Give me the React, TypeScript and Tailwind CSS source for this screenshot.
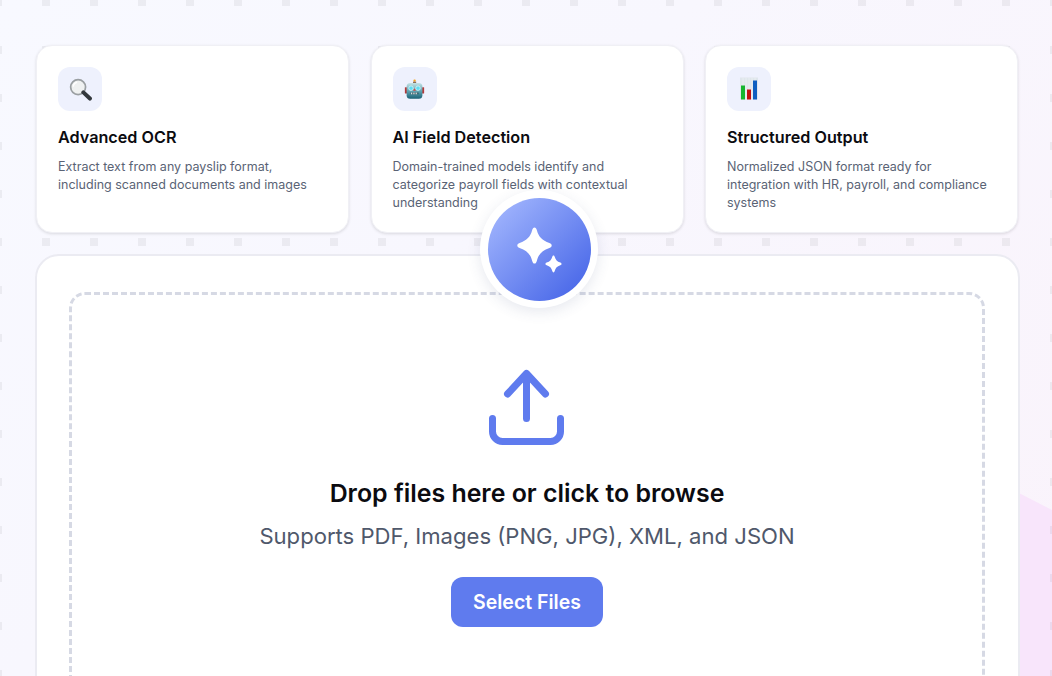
import { ReactNode } from "react";

const inter = "font-['Inter',sans-serif]";

function SearchIcon() {
  return (
    <svg width="23" height="23" viewBox="0 0 24 24">
      <circle cx="9.5" cy="9.5" r="7.8" fill="#eff1f1" stroke="#9a9fa2" strokeWidth="1.8" />
      <path d="M4.500 9a5 5 0 0 1 4-4.600" fill="none" stroke="#fff" strokeWidth="1.500" />
      <path d="M15 15l6.800 6.400" stroke="#33383c" strokeWidth="4.200" strokeLinecap="round" />
    </svg>
  );
}

function RobotIcon() {
  return (
    <svg width="21" height="21" viewBox="0 0 24 24">
      <rect x="10.800" y="0.500" width="2.600" height="2.600" rx="1" fill="#f6a623" />
      <rect x="10.300" y="3" width="3.600" height="1.600" fill="#8a6d5a" />
      <rect x="1" y="9.500" width="2.500" height="7" rx="0.600" fill="#b23a3a" />
      <rect x="20.500" y="9.500" width="2.500" height="7" rx="0.600" fill="#b23a3a" />
      <defs>
        <linearGradient id="robotFace" x1="0" y1="0" x2="0" y2="1">
          <stop offset="0" stopColor="#c6e4e6" />
          <stop offset="0.55" stopColor="#5b9fae" />
          <stop offset="1" stopColor="#1b6276" />
        </linearGradient>
      </defs>
      <rect x="3" y="4.500" width="18" height="18" rx="4" fill="url(#robotFace)" />
      <circle cx="8" cy="10.500" r="2.600" fill="#5fdcf2" stroke="#e4f7fa" strokeWidth="0.800" />
      <circle cx="16" cy="10.500" r="2.600" fill="#5fdcf2" stroke="#e4f7fa" strokeWidth="0.800" />
      <path d="M12 10.500l1.500 3h-3z" fill="#d8443c" />
      <rect x="7.500" y="15.500" width="9" height="2" fill="#274a55" />
      <path d="M8.500 15.500v2M10.500 15.500v2M12.500 15.500v2M14.500 15.500v2" stroke="#f2f2f2" strokeWidth="1.100" />
    </svg>
  );
}

function ChartIcon() {
  return (
    <svg width="24" height="24" viewBox="0 0 24 24">
      <rect x="3" y="0.500" width="18" height="22" fill="#dfe6ec" />
      <path d="M6 0.500v22M9 0.500v22M12 0.500v22M15 0.500v22M18 0.500v22" stroke="#eef2f5" strokeWidth="0.700" />
      <rect x="4" y="8.500" width="4" height="14" fill="#16b52e" />
      <rect x="10" y="12.500" width="4" height="10" fill="#c40f0f" />
      <rect x="16" y="3.500" width="4" height="19" fill="#0f5fc0" />
    </svg>
  );
}

function FeatureCard({ icon, title, text }: { icon: ReactNode; title: string; text: string }) {
  return (
    <div className="h-[188px] rounded-2xl bg-white pt-[22px] px-[22px] border border-[#f0f0f5] shadow-[0_1px_3px_rgba(0,0,0,0.12)]">
      <div className="w-[44px] h-[44px] -mt-px -ml-px rounded-xl bg-[#eef1fd] flex items-center justify-center">
        {icon}
      </div>
      <h3 className="-ml-px mt-[14px] text-[16.2px] leading-[24px] font-semibold text-[#0b0b10]">{title}</h3>
      <p className="-ml-px mt-[9px] text-[12.5px] leading-[18px] text-[#5a6375]">{text}</p>
    </div>
  );
}

export default function App() {
  return (
    <div className={`relative h-[676px] w-[1052px] overflow-hidden bg-[linear-gradient(135deg,#f8f9ff_0%,#f8f7fe_40%,#faf3fb_100%)] ${inter}`}>
      {/* page background decoration */}
      <svg className="absolute inset-0" width="1052" height="676">
        <defs>
          <pattern id="dots" x="-6" y="-2" width="48" height="48" patternUnits="userSpaceOnUse">
            <rect width="8" height="8" fill="#000" fillOpacity="0.05" />
          </pattern>
        </defs>
        <path d="M1015 491L1052 510V676H1015Z" fill="#f8e5fb" />
        <rect width="1052" height="676" fill="url(#dots)" />
      </svg>

      <div className="relative pl-[36px] pr-[34px] pt-[45px]">
        <div className="grid grid-cols-3 gap-x-[21.5px]">
          <FeatureCard
            icon={<SearchIcon />}
            title="Advanced OCR"
            text="Extract text from any payslip format, including scanned documents and images"
          />
          <FeatureCard
            icon={<RobotIcon />}
            title="AI Field Detection"
            text="Domain-trained models identify and categorize payroll fields with contextual understanding"
          />
          <FeatureCard
            icon={<ChartIcon />}
            title="Structured Output"
            text="Normalized JSON format ready for integration with HR, payroll, and compliance systems"
          />
        </div>

        <div className="-ml-px mr-[-2px] mt-[21px] h-[500px] rounded-3xl border-2 border-[#ebebf2] bg-white pl-[32px] pr-[33px] pt-[36px]">
          <div className="h-[500px] rounded-2xl border-[3px] border-dashed border-[#d6d9e4] flex flex-col items-center pt-[72px]">
            <svg width="80" height="80" viewBox="0 0 80 80" fill="none" stroke="#5f7bee" strokeWidth="7" strokeLinecap="round" strokeLinejoin="round">
              <path d="M39.500 51.500V6.500M20.500 27L39.500 6.500L58.500 27" />
              <path d="M5.500 51.500V64.500a10 10 0 0 0 10 10H63.500a10 10 0 0 0 10-10V51.500" />
            </svg>
            <h2 className="mt-[30px] text-[24.9px] leading-[32px] font-semibold text-[#0b0b10]">Drop files here or click to browse</h2>
            <p className="mt-[11px] text-[22.1px] leading-[32px] text-[#4f586b]">Supports PDF, Images (PNG, JPG), XML, and JSON</p>
            <button className="mt-[25px] h-[50px] w-[152px] rounded-xl bg-[#5f7bee] pt-[2px] text-[19.5px] font-semibold text-white">Select Files</button>
          </div>
        </div>
      </div>

      {/* sparkle badge overlapping the panel */}
      <div className="absolute left-[480px] top-[190px] w-[118px] h-[118px] rounded-full bg-white shadow-[0_4px_14px_rgba(60,70,120,0.12)] flex items-center justify-center">
        <div className="w-[103px] h-[103px] rounded-full bg-[linear-gradient(135deg,#a9bcff,#3f5fe6)] flex items-center justify-center">
          <svg width="52" height="50" viewBox="0 0 52 50" fill="#fff">
            <path transform="translate(1.500 1.500)" d="M20 2c1.200 0 1.800 1 2.300 2.600c1.800 6.800 5.300 10.500 12.600 12.900c1.500 .5 2.300 1.300 2.300 2.500s-.8 2-2.300 2.500c-7.300 2.400-10.800 6.100-12.600 12.900c-.5 1.600-1.100 2.600-2.300 2.600s-1.800-1-2.300-2.600c-1.800-6.800-5.300-10.500-12.600-12.900c-1.500-.5-2.300-1.300-2.300-2.500s.8-2 2.300-2.500c7.300-2.400 10.800-6.100 12.600-12.900c.5-1.600 1.100-2.600 2.300-2.600z" />
            <path transform="translate(-0.500 2.500)" d="M41 29c.6 0 .9 .5 1.200 1.300c.9 3.200 2.400 4.800 5.600 5.800c.9 .3 1.200 .8 1.200 1.400s-.3 1-1.200 1.300c-3.200 1-4.700 2.600-5.600 5.800c-.3 .9-.6 1.400-1.200 1.400s-.9-.5-1.200-1.400c-.9-3.200-2.400-4.800-5.600-5.800c-.9-.3-1.200-.7-1.200-1.300s.3-1.100 1.200-1.400c3.200-1 4.700-2.600 5.600-5.800c.3-.8 .6-1.300 1.200-1.300z" />
          </svg>
        </div>
      </div>
    </div>
  );
}
